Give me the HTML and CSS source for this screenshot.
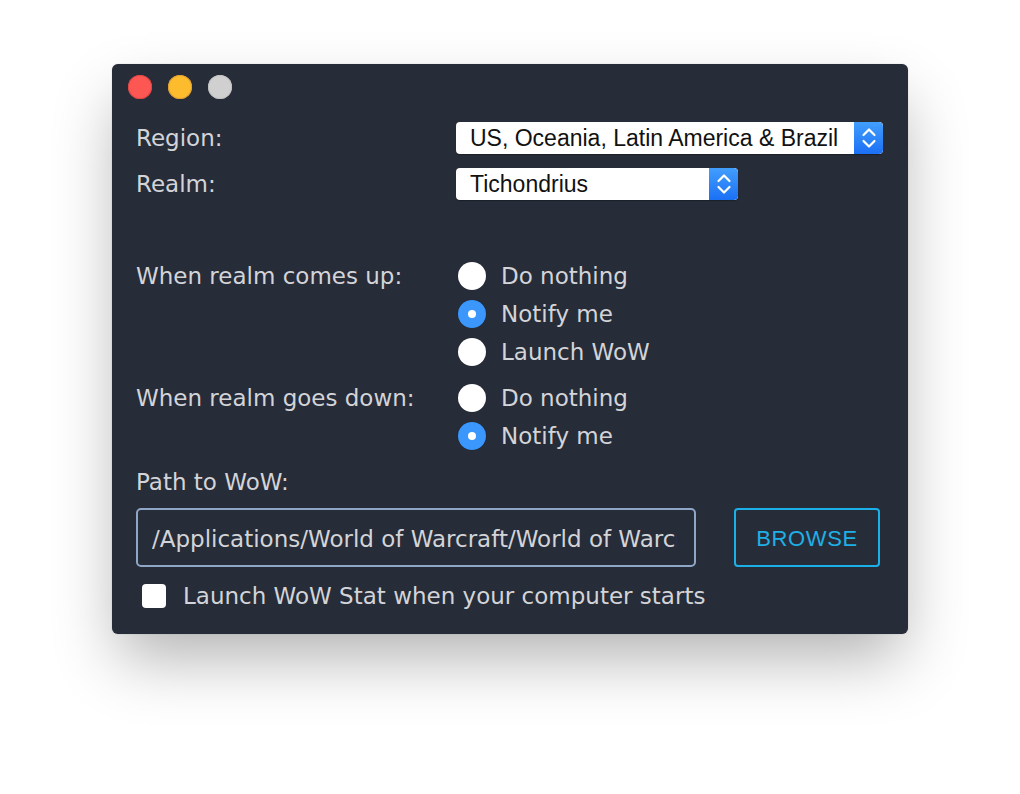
FILE: index.html
```html
<!DOCTYPE html>
<html>
<head>
<meta charset="utf-8">
<link rel="stylesheet" href="styles.css">
</head>
<body>
<div class="stage">
  <div class="window">
    <div class="titlebar">
      <span class="light red"></span>
      <span class="light yellow"></span>
      <span class="light grey"></span>
    </div>
    <div class="content">
      <div class="form">
        <div class="label sel-label">Region:</div>
        <div class="select wide">
          <span class="select-text">US, Oceania, Latin America &amp; Brazil</span>
          <span class="stepper"><svg width="16" height="22" viewBox="0 0 16 22"><path d="M2.5 8 L8 2.5 L13.5 8 M2.5 14 L8 19.5 L13.5 14" fill="none" stroke="#fff" stroke-width="2.2" stroke-linecap="round" stroke-linejoin="round"/></svg></span>
        </div>
        <div class="label sel-label">Realm:</div>
        <div class="select narrow">
          <span class="select-text">Tichondrius</span>
          <span class="stepper"><svg width="16" height="22" viewBox="0 0 16 22"><path d="M2.5 8 L8 2.5 L13.5 8 M2.5 14 L8 19.5 L13.5 14" fill="none" stroke="#fff" stroke-width="2.2" stroke-linecap="round" stroke-linejoin="round"/></svg></span>
        </div>

        <div class="label radio-label group-first">When realm comes up:</div>
        <div class="radios group-first">
          <div class="radio-row"><span class="radio"></span><span>Do nothing</span></div>
          <div class="radio-row"><span class="radio on"></span><span>Notify me</span></div>
          <div class="radio-row"><span class="radio"></span><span>Launch WoW</span></div>
        </div>

        <div class="label radio-label group-second">When realm goes down:</div>
        <div class="radios group-second">
          <div class="radio-row"><span class="radio"></span><span>Do nothing</span></div>
          <div class="radio-row"><span class="radio on"></span><span>Notify me</span></div>
        </div>
      </div>

      <div class="label path-label">Path to WoW:</div>
      <div class="path-row">
        <input class="path-input" type="text" readonly value="/Applications/World of Warcraft/World of Warcraft.app">
        <div class="browse">BROWSE</div>
      </div>
      <div class="check-row">
        <span class="checkbox"></span>
        <span>Launch WoW Stat when your computer starts</span>
      </div>
    </div>
  </div>
</div>
</body>
</html>
```
FILE: styles.css
```css
html, body {
  margin: 0;
  padding: 0;
  background: #ffffff;
}
.stage {
  padding: 64px 0 0 112px;
  min-height: 794px;
  box-sizing: border-box;
}
.window {
  width: 796px;
  height: 570px;
  box-sizing: border-box;
  background: #272c39;
  border-radius: 6px;
  box-shadow: 0 30px 60px -6px rgba(0,0,0,0.3), 0 0 1px rgba(0,0,0,0.35);
  font-family: "DejaVu Sans", Verdana, sans-serif;
  font-size: 23px;
  color: #d3d4d8;
}
.titlebar {
  height: 46px;
  display: flex;
  align-items: center;
  gap: 16px;
  padding-left: 16px;
  box-sizing: border-box;
}
.light {
  width: 24px;
  height: 24px;
  border-radius: 50%;
  display: block;
}
.red { background: #fc5753; box-shadow: inset 0 0 0 1px #df4744; }
.yellow { background: #fdbc2d; box-shadow: inset 0 0 0 1px #de9f33; }
.grey { background: #d0d0d0; box-shadow: inset 0 0 0 1px #c0c0c0; }

.content {
  padding: 12px 28px 0 24px;
}
.form {
  display: grid;
  grid-template-columns: 320px 1fr;
  row-gap: 14px;
}
.label {
  line-height: 32px;
  white-space: nowrap;
}
.sel-label {
  line-height: 32px;
}
.select {
  height: 32px;
  background: #ffffff;
  border-radius: 4px;
  display: flex;
  align-items: center;
  justify-content: space-between;
  box-sizing: border-box;
  overflow: hidden;
  box-shadow: 0 1px 1px rgba(0,0,0,0.3);
}
.select.wide { width: 427px; }
.select.narrow { width: 282px; }
.select-text {
  font-family: "Liberation Sans", Arial, sans-serif;
  font-size: 23px;
  color: #111;
  padding-left: 14px;
  padding-top: 1px;
  white-space: nowrap;
}
.stepper {
  width: 29px;
  height: 32px;
  background: linear-gradient(#429efd, #1b70f4);
  display: flex;
  align-items: center;
  justify-content: center;
  border-radius: 0 4px 4px 0;
}
.radio-label {
  line-height: 38px;
}
.group-first { margin-top: 43px; }
.group-second { margin-top: -6px; }
.radios {
  display: flex;
  flex-direction: column;
}
.radio-row {
  height: 38px;
  display: flex;
  align-items: center;
  gap: 15px;
  padding-left: 2px;
}
.radio {
  width: 28px;
  height: 28px;
  border-radius: 50%;
  background: #ffffff;
  box-shadow: 0 0 1px rgba(0,0,0,0.4);
  display: flex;
  align-items: center;
  justify-content: center;
  flex: none;
}
.radio.on {
  background: #3b97fc;
}
.radio.on::after {
  content: "";
  width: 8px;
  height: 8px;
  border-radius: 50%;
  background: #ffffff;
}
.path-label {
  margin-top: 13px;
  line-height: 28px;
}
.path-row {
  margin-top: 12px;
  display: flex;
  gap: 38px;
}
.path-input {
  width: 560px;
  height: 59px;
  box-sizing: border-box;
  border: 2px solid #8fa6c6;
  border-radius: 5px;
  background: transparent;
  color: #d3d4d8;
  font-family: "DejaVu Sans", Verdana, sans-serif;
  font-size: 23px;
  padding: 2px 17px 0 14px;
  margin: 0;
  outline: none;
}
.browse {
  width: 146px;
  height: 59px;
  box-sizing: border-box;
  border: 2px solid #1cb0e8;
  border-radius: 4px;
  color: #1eb0e6;
  font-family: "Liberation Sans", Arial, sans-serif;
  font-size: 22px;
  letter-spacing: 0.6px;
  padding-top: 3px;
  display: flex;
  align-items: center;
  justify-content: center;
}
.check-row {
  margin-top: 15px;
  height: 28px;
  display: flex;
  align-items: center;
  gap: 17px;
  padding-left: 6px;
}
.checkbox {
  width: 24px;
  height: 24px;
  background: #ffffff;
  border-radius: 4px;
  flex: none;
}
```
